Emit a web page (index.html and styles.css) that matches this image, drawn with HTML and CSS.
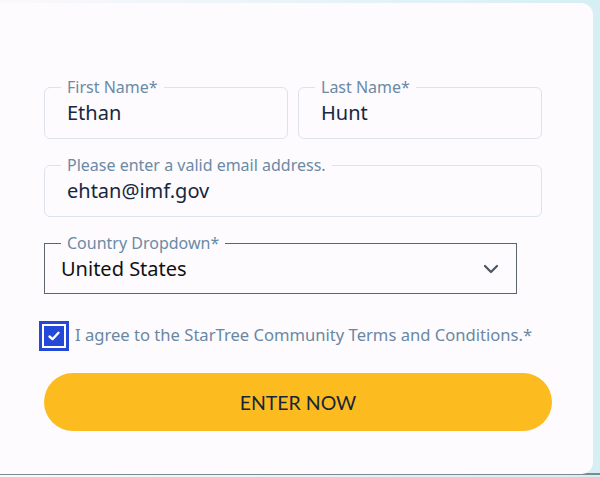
FILE: index.html
```html
<!DOCTYPE html>
<html>
<head>
<meta charset="utf-8">
<link rel="stylesheet" href="styles.css">
</head>
<body>
<div class="page">
  <form class="card">
    <div class="row">
      <div class="field">
        <span class="label">First Name*</span>
        <div class="value">Ethan</div>
      </div>
      <div class="field">
        <span class="label">Last Name*</span>
        <div class="value">Hunt</div>
      </div>
    </div>
    <div class="field">
      <span class="label">Please enter a valid email address.</span>
      <div class="value">ehtan@imf.gov</div>
    </div>
    <div class="field select">
      <span class="label">Country Dropdown*</span>
      <div class="value">United States</div>
      <svg class="chev" width="16" height="10" viewBox="0 0 16 10"><path d="M2 2 L8 8 L14 2" fill="none" stroke="#4a5563" stroke-width="2.2" stroke-linecap="round" stroke-linejoin="round"/></svg>
    </div>
    <label class="agree">
      <span class="box"><svg width="14" height="12" viewBox="0 0 14 12"><path d="M2.5 6.5 L5.5 9.2 L11.5 2.8" fill="none" stroke="#fff" stroke-width="2.4" stroke-linecap="round" stroke-linejoin="round"/></svg></span>
      <span class="agree-text">I agree to the StarTree Community Terms and Conditions.*</span>
    </label>
    <button type="button" class="btn">ENTER NOW</button>
  </form>
</div>
</body>
</html>
```
FILE: styles.css
```css
html, body {
  margin: 0;
  padding: 0;
}
body {
  width: 600px;
  height: 477px;
  overflow: hidden;
  background: linear-gradient(90deg, #fbf8fb 0%, #e4f3f8 60%, #d5eff5 100%);
  font-family: "Noto Sans", "Lato", sans-serif;
}
.page {
  height: 475px;
  border-bottom: 2px solid #7b8b8e;
  padding-top: 3px;
  box-sizing: border-box;
}
.card {
  width: 593px;
  height: 471px;
  box-sizing: border-box;
  background: #fdfbfd;
  border-radius: 0 12px 12px 0;
  padding: 84px 51px 0 44px;
  display: flex;
  flex-direction: column;
  align-items: flex-start;
}
.row {
  display: flex;
  gap: 10px;
  width: 498px;
}
.row .field {
  flex: 1;
  width: auto;
}
.field {
  width: 498px;
  height: 52px;
  margin-bottom: 26px;
  padding: 0 22px;
  box-sizing: border-box;
  border: 1.5px solid #dde3ea;
  border-radius: 6px;
  position: relative;
  display: flex;
  align-items: center;
}
.label {
  position: absolute;
  left: 16px;
  top: -11px;
  padding: 0 6px;
  background: #fdfbfd;
  font-size: 16px;
  line-height: 20px;
  color: #6a8aa6;
  white-space: nowrap;
}
.value {
  font-size: 20px;
  line-height: 24px;
  color: #172740;
}
.select {
  width: 473px;
  height: 51px;
  border: 1.5px solid #5c6670;
  border-radius: 0;
  padding: 0 17px 0 16px;
  margin-bottom: 27px;
}
.select .value {
  color: #111;
  flex: 1;
}
.agree {
  display: flex;
  align-items: center;
  gap: 6px;
  margin-left: -5px;
  margin-bottom: 22px;
}
.box {
  width: 24px;
  height: 24px;
  border: 3px solid #2449d8;
  background: #2449d8;
  box-shadow: inset 0 0 0 2px #fff;
  display: flex;
  align-items: center;
  justify-content: center;
  flex: none;
}
.agree-text {
  font-size: 16.6px;
  color: #6888a4;
  margin-top: -3px;
}
.btn {
  width: 508px;
  height: 58px;
  border: none;
  border-radius: 29px;
  background: #fcbb1e;
  color: #18243c;
  font-family: "Lato", sans-serif;
  font-size: 19.5px;
  padding: 0;
  cursor: pointer;
}
```
